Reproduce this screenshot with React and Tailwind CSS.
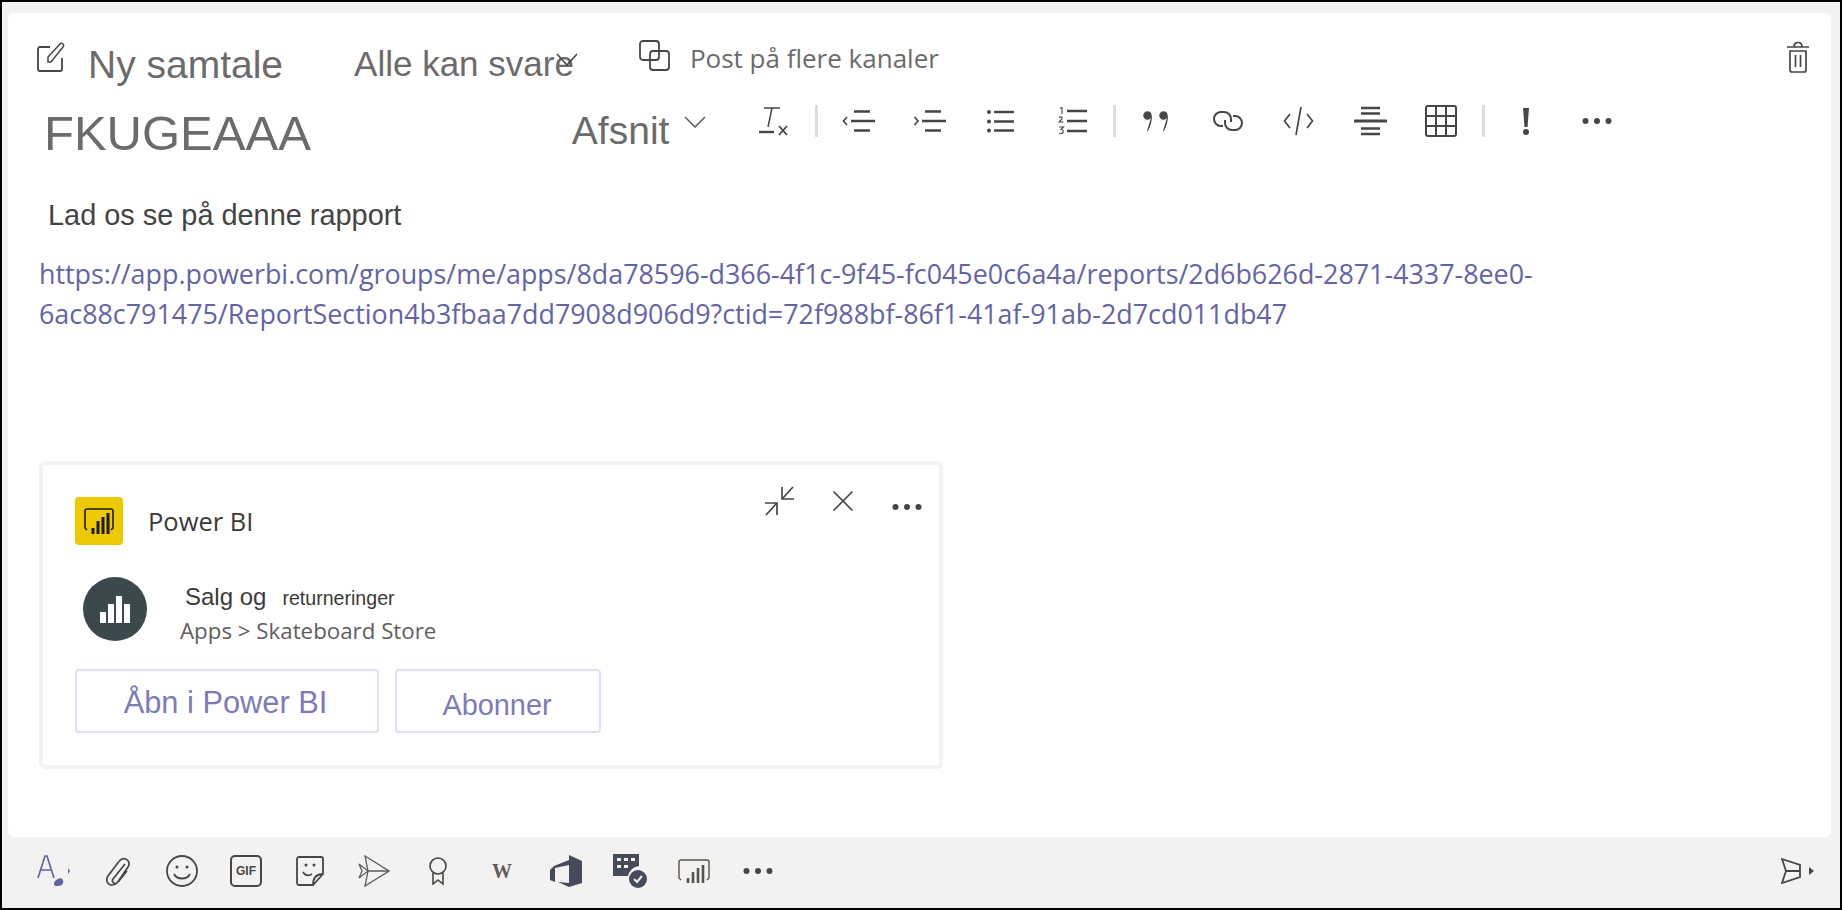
import { X } from 'lucide-react';

const SANS = 'font-["Liberation_Sans",Arial,sans-serif]';
const OPEN = 'font-["Open_Sans",sans-serif]';

// shared svg wrapper, stroke icons in the grey Teams uses
const Svg = ({ w = 32, h = 32, vb, color = '#484644', sw = 2, children }) => (
  <svg width={w} height={h} viewBox={vb || `0 0 ${w} ${h}`} fill="none" stroke={color} strokeWidth={sw}>
    {children}
  </svg>
);

const Dots = ({ color = '#484644' }) => (
  <svg width="30" height="8" viewBox="0 0 30 8" fill={color}>
    <circle cx="3.500" cy="4" r="3" />
    <circle cx="15" cy="4" r="3" />
    <circle cx="26.500" cy="4" r="3" />
  </svg>
);

const TOOLBAR = [
  <Svg w={30} h={30} sw={1.500}>
    <path d="M5 2h16M13 2 9 21" />
    <path d="M0 26h15" strokeWidth="2.400" />
    <path d="m20 20 8 9M28 20l-8 9" strokeWidth="1.800" />
  </Svg>,
  'div',
  <Svg w={33} h={22} sw={2.300}>
    <path d="M12 1.500h16M9 11h24M12 20.500h16" />
    <path d="M5 7 1.500 11 5 15" strokeWidth="1.700" />
  </Svg>,
  <Svg w={33} h={22} sw={2.300}>
    <path d="M12 1.500h16M9 11h24M12 20.500h16" />
    <path d="m1.500 7 3.500 4-3.500 4" strokeWidth="1.700" />
  </Svg>,
  <Svg w={27} h={24}>
    <path d="M7 3h20M7 12.500h20M7 21.500h20" strokeWidth="2.300" />
    <g fill="#484644" stroke="none">
      <circle cx="2" cy="3" r="2" />
      <circle cx="2" cy="12.500" r="2" />
      <circle cx="2" cy="21.500" r="2" />
    </g>
  </Svg>,
  <Svg w={29} h={28}>
    <path d="M9 4h20M9 14h20M9 24h20" strokeWidth="2.300" />
    <path d="M2 1.500 4 .5v6.500M1 10.500c2-1.500 4.500 0 2 2.500l-2 2h4.500M1 20h4.500l-2.500 2.500c3 0 3 4 0 4H1" strokeWidth="1.100" />
  </Svg>,
  'div',
  <svg width="26" height="20" viewBox="0 0 26 20" fill="#484644">
    <circle cx="4.500" cy="4.500" r="4.200" />
    <path d="M8.700 4.500 4 20l1 .2C8 14 9 9 9 4.500z" />
    <circle cx="20.500" cy="4.500" r="4.200" />
    <path d="M24.700 4.500 20 20l1 .2C24 14 25 9 25 4.500z" />
  </svg>,
  <Svg w={32} h={22} sw={2}>
    <path d="M19 12V9a7 7 0 0 0-7-7H9a7 7 0 0 0 0 14h2" />
    <path d="M13 10v3a7 7 0 0 0 7 7h3a7 7 0 0 0 0-14h-2" />
  </Svg>,
  <Svg w={31} h={30} sw={1.700}>
    <path d="M7 8 1.500 15 7 22M24 8l5.500 7-5.500 7M18 1 13 29" />
  </Svg>,
  <Svg w={33} h={30} sw={2.300}>
    <path d="M7 2h19M7 7.500h19M7 22.500h19M7 28h19" />
    <path d="M1 15h31" strokeWidth="3" strokeLinecap="round" />
  </Svg>,
  <Svg w={32} h={32} sw={2}>
    <rect x="1" y="1" width="30" height="30" rx="2" />
    <path d="M11 1v30M21 1v30M1 11h30M1 21h30" />
  </Svg>,
  'div',
  <svg width="10" height="27" viewBox="0 0 10 27" fill="#484644">
    <path d="M2 0h6L6.500 19h-3z" />
    <circle cx="5" cy="24" r="3" />
  </svg>,
  <Dots />,
];

const BOTTOM = [
  <svg width="34" height="32" viewBox="0 0 34 32" fill="none">
    <path d="M1 23 8 1h2l7 22M4 15h11" stroke="#6264a7" strokeWidth="1.700" />
    <path d="M6 31h12c-1 0-1-3-1-3 1-3 7-7 9-3 1 3-1 6-5 6z" fill="#6264a7" />
    <path d="m31 13 2 3-2 3z" fill="#6264a7" />
  </svg>,
  <Svg w={26} h={32} sw={1.700}>
    <path d="M20 9 8 24c-2 3 2 6 4 4L23 12c3-4-1-10-6-8-2 1-4 3-5 5L3 21c-3 5 0 9 4 9 3 0 5-2 7-4L22 16" />
  </Svg>,
  <Svg w={32} h={32} sw={1.800}>
    <circle cx="16" cy="16" r="15" />
    <path d="M8 19c3 6 13 6 16 0" />
    <circle cx="11" cy="12" r="1.500" fill="#484644" stroke="none" />
    <circle cx="21" cy="12" r="1.500" fill="#484644" stroke="none" />
  </Svg>,
  <div className="w-[32px] h-[32px] border-2 border-[#484644] rounded-[5px] flex items-center justify-center">
    <span className={`${SANS} text-[12px] font-bold leading-none text-[#484644]`}>GIF</span>
  </div>,
  <Svg w={28} h={30} sw={1.800}>
    <path d="M17 29H3a2 2 0 0 1-2-2V3a2 2 0 0 1 2-2h22a2 2 0 0 1 2 2v15zM17 29c0-7 3-11 10-11" />
    <path d="M7 16c2 4 6 4 9 2" />
    <circle cx="10" cy="9" r="1.500" fill="#484644" stroke="none" />
    <circle cx="18" cy="9" r="1.500" fill="#484644" stroke="none" />
  </Svg>,
  <Svg w={32} h={32} sw={1.300} color="#5f5d5b">
    <path d="M7 1 31 16 7 31l3-15z" />
    <path d="m1 9 9 7-9 7 3-7zM10 16h21" />
  </Svg>,
  <Svg w={22} h={28} sw={1.600}>
    <circle cx="11" cy="9" r="8" />
    <path d="M6 16v11l5-4 5 4V16" />
  </Svg>,
  <span className='font-["Liberation_Serif",serif] text-[20px] font-bold leading-none text-[#5f5d5b]'>W</span>,
  <svg width="32" height="32" viewBox="0 0 32 32" fill="#464b5c">
    <path d="M19 0v5L4 11 0 15v10l5 2V13l14-3v18L8 27l11 5 13-4V6z" />
  </svg>,
  <svg width="34" height="34" viewBox="0 0 34 34" fill="#464b5c">
    <path d="M0 0h26v12c-6 1-10 5-11 10H0z" />
    <path d="M4 4h4v3H4zM11 4h4v3h-4zM18 4h4v3h-4zM4 11h4v3H4zM11 11h4v3h-4z" fill="#f3f2f1" />
    <circle cx="25" cy="25" r="9" />
    <path d="m21 25 3 3 5-6" stroke="#f3f2f1" strokeWidth="2" fill="none" />
  </svg>,
  <Svg w={32} h={25} sw={1.400} color="#55534f">
    <path d="M3 21 1 19V3a2 2 0 0 1 2-2h26a2 2 0 0 1 2 2v16l-2 2" />
    <path d="M10 24v-5M15 24V13M20 24V9M25 24V6" strokeWidth="2.600" />
  </Svg>,
  <Dots />,
];

const App = () => (
  <div className={`w-[1842px] h-[910px] overflow-hidden flex flex-col bg-[#f3f2f1] border-2 border-black ${SANS}`}>
    <div className="flex-1 mt-[11px] ml-[6px] mr-[9px] bg-white rounded-[6px] flex flex-col min-h-0">
      {/* compose header */}
      <div className="flex items-start h-[75px] pl-[29px] pr-[22px] text-[#6b6b6b]">
        <div className="mt-[29px]">
          <Svg w={28} h={30} sw={1.800}>
            <path d="M13 5H3a2 2 0 0 0-2 2v20a2 2 0 0 0 2 2h20a2 2 0 0 0 2-2V16" />
            <path d="M11 20V15L23 2c2-2 5 1 3 3L14 20z" strokeWidth="1.500" />
          </Svg>
        </div>
        <span className="ml-[23px] mt-[29px] text-[39px] leading-[46px] whitespace-nowrap">Ny samtale</span>
        <span className="ml-[71px] mt-[29px] text-[35px] leading-[44px] whitespace-nowrap">Alle kan svare</span>
        <div className="-ml-[18px] mt-[40px]">
          <Svg w={22} h={14} sw={1.600}>
            <path d="m1 1 10 11L21 1" />
          </Svg>
        </div>
        <div className="ml-[61px] mt-[27px]">
          <Svg w={32} h={32} sw={1.800}>
            <rect x="1" y="1" width="19" height="19" rx="3" />
            <rect x="11" y="11" width="19" height="19" rx="3" />
          </Svg>
        </div>
        <span className={`ml-[19px] mt-[28px] text-[26px] leading-[34px] whitespace-nowrap ${OPEN}`}>Post på flere kanaler</span>
        <div className="ml-auto mt-[28px]">
          <Svg w={22} h={32} sw={1.700}>
            <path d="M0 6h22M7 6c0-6 8-6 8 0" />
            <path d="M3 10h16v19a2 2 0 0 1-2 2H5a2 2 0 0 1-2-2zM8.500 14v12M13.500 14v12" />
          </Svg>
        </div>
      </div>

      {/* subject + format bar */}
      <div className="flex items-start h-[83px] pl-[36px]">
        <span className="text-[49px] leading-[56px] mt-[17px] text-[#6b6b6b] whitespace-nowrap">FKUGEAAA</span>
        <span className="ml-[261px] mt-[19px] text-[39px] leading-[48px] text-[#6b6b6b] whitespace-nowrap">Afsnit</span>
        <div className="ml-[15px] mt-[28px]">
          <Svg w={22} h={12} sw={1.600} color="#616161">
            <path d="m1 1 10 10L21 1" />
          </Svg>
        </div>
        <div className="flex items-center h-[34px] ml-[32px] mt-[16px]">
          {TOOLBAR.map((item, i) =>
            item === 'div' ? (
              <div key={i} className="w-[13px] flex justify-center">
                <div className="w-[3px] h-[32px] bg-[#dcdcdc]" />
              </div>
            ) : (
              <div key={i} className="w-[71.250px] flex justify-center">{item}</div>
            )
          )}
        </div>
      </div>

      {/* message body */}
      <p className="mt-[26px] ml-[40px] text-[28.900px] leading-[36px] text-[#444444]">Lad os se på denne rapport</p>
      <a className={`block mt-[21px] ml-[31px] w-[1560px] text-[26.860px] leading-[40px] text-[#6264a7] ${OPEN}`}>
        https://app.powerbi.com/groups/me/apps/8da78596-d366-4f1c-9f45-fc045e0c6a4a/reports/2d6b626d-2871-4337-8ee0-<br />
        6ac88c791475/ReportSection4b3fbaa7dd7908d906d9?ctid=72f988bf-86f1-41af-91ab-2d7cd011db47
      </a>

      {/* Power BI card */}
      <div className="relative mt-[127px] ml-[31px] w-[904px] h-[308px] border-[4px] border-[#f3f2f1] rounded-[6px] bg-white pl-[32px] pt-[32px]">
        <div className="absolute right-[17px] top-[18px] flex items-center">
          <Svg w={30} h={30} sw={1.700}>
            <path d="M28 1 18 12M17 1v12h12M1 29l10-11M12 29V17H0" />
          </Svg>
          <div className="ml-[30px] w-[36px] flex justify-center">
            <X size={36} strokeWidth={1.150} color="#484644" />
          </div>
          <div className="ml-[31px] mt-[11px]"><Dots /></div>
        </div>

        <div className="flex items-center">
          <div className="w-[48px] h-[48px] rounded-[4px] bg-[#edc900] flex items-center justify-center">
            <svg width="32" height="32" viewBox="0 0 32 32" fill="none" stroke="#1b1a00" strokeWidth="1.600">
              <path d="M4 25 2 23V6a2 2 0 0 1 2-2h24a2 2 0 0 1 2 2v17l-2 2" />
              <path d="M10 29v-6M15 29V16M20 29V12M25 29V8" strokeWidth="3" />
            </svg>
          </div>
          <span className={`ml-[25px] text-[25.500px] leading-[32px] text-[#3b3a39] ${OPEN}`}>Power BI</span>
        </div>

        <div className="flex items-start mt-[32px] ml-[8px]">
          <div className="w-[64px] h-[64px] rounded-full bg-[#3b484c] flex items-center justify-center">
            <svg width="31" height="27" viewBox="0 0 31 27" fill="#ffffff">
              <path d="M0 16h6v11H0zM8 8h6v19H8zM16 0h6v27h-6zM24 8h6v19h-6z" />
            </svg>
          </div>
          <div className="ml-[33px] pt-[6px]">
            <div className="ml-[5px] flex items-baseline text-[#3b3a39] whitespace-nowrap">
              <span className="text-[24px] leading-[28px]">Salg og</span>
              <span className="ml-[16px] text-[19.600px] leading-[28px]">returneringer</span>
            </div>
            <div className={`mt-[4px] text-[22.300px] leading-[30px] text-[#605e5c] whitespace-nowrap ${OPEN}`}>Apps &gt; Skateboard Store</div>
          </div>
        </div>

        <div className="flex mt-[23px]">
          <button className="w-[304px] h-[64px] border-2 border-[#e1dff3] rounded-[4px] text-[30.800px] text-[#7b7bbb] pt-[5px] pr-[3px]">Åbn i Power BI</button>
          <button className="ml-[16px] w-[206px] h-[64px] border-2 border-[#e1dff3] rounded-[4px] text-[28.900px] text-[#7b7bbb] pt-[10px] pr-[2px]">Abonner</button>
        </div>
      </div>
    </div>

    {/* bottom action bar */}
    <div className="h-[71px] shrink-0 flex items-center pl-[20px] pr-[26px] pb-[3px]">
      {BOTTOM.map((item, i) => (
        <div key={i} className="w-[64px] flex justify-center items-center">{item}</div>
      ))}
      <div className="ml-auto flex items-center">
        <Svg w={20} h={26} sw={1.800}>
          <path d="M1 1 19 7v12L1 25l4-12zM5 13h14" />
        </Svg>
        <svg className="ml-[8px]" width="5" height="8" viewBox="0 0 5 8" fill="#484644">
          <path d="m0 0 5 4-5 4z" />
        </svg>
      </div>
    </div>
  </div>
);

export default App;
